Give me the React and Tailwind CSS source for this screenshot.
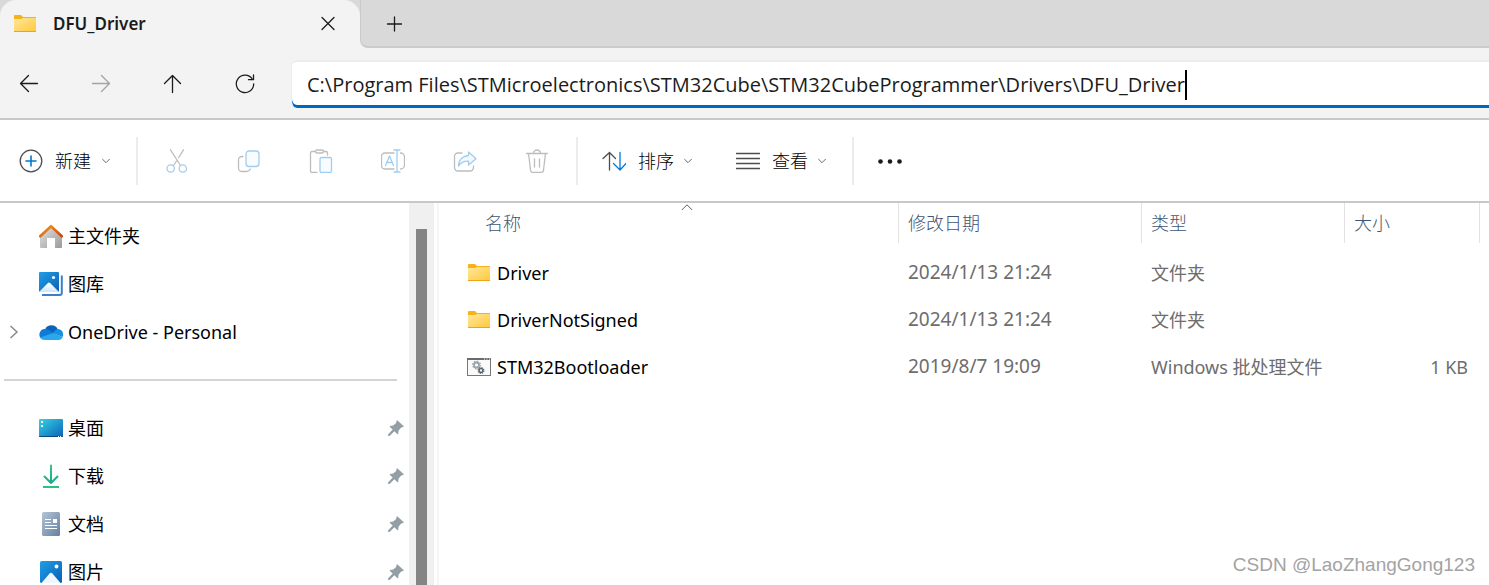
import { useState } from "react";

const FolderIcon = () => (
  <svg className="w-6 h-6 shrink-0" viewBox="0 0 24 24">
    <defs>
      <linearGradient id="folder" x1="0" y1="0" x2="1" y2="1">
        <stop offset="0" stopColor="#ffe79c" />
        <stop offset="1" stopColor="#ffc83a" />
      </linearGradient>
    </defs>
    <path d="M1 4a1 1 0 0 1 1-1h6l2 2h12.500a.5.5 0 0 1 .5.5V12H1z" fill="#f6b21b" />
    <path d="M1 7h7l2-1h13v13.500a.5.5 0 0 1-.5.5h-21a.5.5 0 0 1-.5-.5z" fill="url(#folder)" />
    <path d="M1 19h22v.5a.5.5 0 0 1-.5.5h-21a.5.5 0 0 1-.5-.5z" fill="#eaa51c" />
  </svg>
);

const BatchIcon = () => (
  <svg className="w-6 h-6 shrink-0" viewBox="0 0 24 24">
    <rect x=".5" y="3.500" width="23" height="17" fill="#fafafa" stroke="#77777a" />
    <path d="M0 3h24v2H0z" fill="#6b6b6e" />
    <path d="M17 4h1M19.500 4h1M22 4h1" stroke="#fff" />
    <circle cx="9.500" cy="10" r="2.500" fill="none" stroke="#9aa5ae" strokeWidth="1.800" />
    <circle cx="9.500" cy="10" r="3.800" fill="none" stroke="#9aa5ae" strokeWidth="1.400" strokeDasharray="1.500 1.480" />
    <circle cx="14" cy="15.500" r="1.900" fill="none" stroke="#5b666e" strokeWidth="1.500" />
    <circle cx="14" cy="15.500" r="2.900" fill="none" stroke="#5b666e" strokeWidth="1.200" strokeDasharray="1.200 1.080" />
  </svg>
);

const HomeIcon = () => (
  <svg className="w-6 h-6 shrink-0" viewBox="0 0 24 24">
    <defs>
      <linearGradient id="wall" x1="0" y1="0" x2="1" y2="1">
        <stop offset="0" stopColor="#e3e3e3" />
        <stop offset="1" stopColor="#9b9b9b" />
      </linearGradient>
      <linearGradient id="roof" x1="0" y1="0" x2="1" y2="1">
        <stop offset="0" stopColor="#f59a1b" />
        <stop offset="1" stopColor="#d0420f" />
      </linearGradient>
    </defs>
    <path d="M1 11 12 2l11 9v12a1 1 0 0 1-1 1h-6V14H8v10H2a1 1 0 0 1-1-1z" fill="url(#wall)" />
    <path d="M1.200 12.300 12 2.200l10.800 10.100" fill="none" stroke="url(#roof)" strokeWidth="2.600" strokeLinecap="round" strokeLinejoin="round" />
  </svg>
);

const GalleryIcon = () => (
  <svg className="w-6 h-6 shrink-0" viewBox="0 0 24 24">
    <defs>
      <linearGradient id="sky" x1="0" y1="0" x2="1" y2="1">
        <stop offset="0" stopColor="#1f9fe6" />
        <stop offset="1" stopColor="#0a5fb5" />
      </linearGradient>
      <linearGradient id="hill" x1="0" y1="0" x2="0" y2="1">
        <stop offset="0" stopColor="#fff" />
        <stop offset="1" stopColor="#cfe6fb" />
      </linearGradient>
    </defs>
    <path d="M22.800 3.500V21a2 2 0 0 1-2 2H3" fill="none" stroke="#3d80c6" strokeWidth="2" />
    <rect width="20" height="20" rx="1" fill="url(#sky)" />
    <path d="M0 20 8.700 11.300a1.800 1.800 0 0 1 2.600 0L20 20z" fill="url(#hill)" />
    <circle cx="14.500" cy="5.500" r="1.600" fill="#fff" />
  </svg>
);

const PicturesIcon = () => (
  <svg className="w-6 h-6 shrink-0" viewBox="0 0 24 24">
    <defs>
      <linearGradient id="photo" x1="0" y1="0" x2="1" y2="1">
        <stop offset="0" stopColor="#1f9fe6" />
        <stop offset="1" stopColor="#0a5fb5" />
      </linearGradient>
    </defs>
    <rect x="1" y="1" width="22" height="22" rx="1.500" fill="url(#photo)" />
    <path d="M2.500 23 10.600 13.400a1.900 1.900 0 0 1 2.800 0L21.500 23z" fill="#f0f7ff" />
    <circle cx="17.500" cy="6.500" r="1.900" fill="#fff" />
  </svg>
);

const OneDriveIcon = () => (
  <svg className="w-6 h-6 shrink-0" viewBox="0 0 24 24">
    <path d="M6 9.500A7 7 0 0 1 18.800 9.500L14 15z" fill="#0a63b8" />
    <path d="M5.500 9a5.600 5.600 0 0 1 3.700.8L17 14 2 18.500A5.600 5.600 0 0 1 5.500 9z" fill="#0f7bd6" />
    <path d="M18.800 9a5.400 5.400 0 0 1 4.700 8L14 13.200A7.500 7.500 0 0 1 18.800 9z" fill="#1790e2" />
    <path d="M1 17.500 14.500 13l9.200 4a4.500 4.500 0 0 1-4.400 3H6a5.800 5.800 0 0 1-5-2.500z" fill="#2aa8ec" />
  </svg>
);

const DesktopIcon = () => (
  <svg className="w-6 h-6 shrink-0" viewBox="0 0 24 24">
    <defs>
      <linearGradient id="desk" x1="0" y1="0" x2="1" y2="1">
        <stop offset="0" stopColor="#35d3e6" />
        <stop offset="1" stopColor="#0b62b8" />
      </linearGradient>
    </defs>
    <rect y="3" width="24" height="18" rx="1" fill="url(#desk)" />
    <path d="M0 20h24a1 1 0 0 1-1 1H1a1 1 0 0 1-1-1z" fill="#0b4a7c" />
    <path d="M2 5h2v2H2zM2 9h2v2H2zM19 20h1v1h-1zM21 20h1v1h-1z" fill="#fff" />
  </svg>
);

const DownloadIcon = () => (
  <svg className="w-6 h-6 shrink-0" viewBox="0 0 24 24">
    <defs>
      <linearGradient id="down" x1="0" y1="0" x2="0" y2="24" gradientUnits="userSpaceOnUse">
        <stop offset="0" stopColor="#35c987" />
        <stop offset="1" stopColor="#13a08c" />
      </linearGradient>
    </defs>
    <path d="M12 1.500V19M5.500 12.500l6.500 6.500 6.500-6.500" fill="none" stroke="url(#down)" strokeWidth="2" strokeLinejoin="round" strokeLinecap="round" />
    <path d="M4 23h16" stroke="#2fbf86" strokeWidth="2" />
  </svg>
);

const DocumentIcon = () => (
  <svg className="w-6 h-6 shrink-0" viewBox="0 0 24 24">
    <defs>
      <linearGradient id="doc" x1="0" y1="0" x2="1" y2="1">
        <stop offset="0" stopColor="#b3c4d6" />
        <stop offset="1" stopColor="#65819f" />
      </linearGradient>
    </defs>
    <rect x="3" width="18" height="24" rx="1.500" fill="url(#doc)" />
    <path d="M6 7.500h6M6 10.500h6M6 13.500h12M6 16.500h12" stroke="#fff" strokeWidth="1.200" />
    <rect x="14" y="7" width="4" height="4" fill="#fff" />
  </svg>
);

const PinIcon = () => (
  <svg className="w-4 h-4 shrink-0" viewBox="0 0 16 16" fill="#939fa6">
    <path d="M9.500.5 15.500 6c.4.500.2 1-.4 1.100l-1.900.4-2.700 3.300-.3 2.900c-.1.600-.6.800-1 .4L6.400 11.300 1.500 16 .2 15.900 0 14.500 4.700 9.600 1.900 6.900c-.4-.4-.2-.9.300-1l3-.5L8.200 3l.3-2c.1-.6.600-.8 1-.5z" />
  </svg>
);

const Chevron = () => (
  <svg className="w-2 h-2 shrink-0" viewBox="0 0 8 8" fill="none" stroke="#6a6a6a">
    <path d="M.3 2 4 5.700 7.700 2" />
  </svg>
);

// outlined icon on a 24px grid
const Line = ({ children, color = "#1b1b1b" }) => (
  <svg className="w-6 h-6 shrink-0" viewBox="0 0 24 24" fill="none" stroke={color} strokeWidth="1.300" strokeLinecap="round" strokeLinejoin="round">
    {children}
  </svg>
);

const navButtons = [
  { label: "返回", icon: <Line><path d="M20.500 11.500h-17M11.500 3.500l-8 8 8 8" /></Line> },
  { label: "前进", disabled: true, icon: <Line color="#a3a3a3"><path d="M3.500 11.500h17M12.500 3.500l8 8-8 8" /></Line> },
  { label: "向上", icon: <Line><path d="M11.500 20.500V3.500M3.500 11.500l8-8 8 8" /></Line> },
  { label: "刷新", icon: <Line><path d="M19.200 7A8.700 8.700 0 1 0 20.700 12M20.500 3v4.700h-5" /></Line> },
];

const editButtons = [
  {
    label: "剪切",
    icon: (
      <Line color="#bdbdbd">
        <path d="M5.500.8 15.500 16.500M18.500.8 13.700 8.500M11.500 12 8.500 16.500" />
        <g stroke="#9fcdf2"><circle cx="5.700" cy="19.500" r="3.700" /><circle cx="17.800" cy="19.500" r="3.700" /></g>
      </Line>
    ),
  },
  {
    label: "复制",
    icon: (
      <Line color="#bdbdbd">
        <path d="M6 7.500H5A3.500 3.500 0 0 0 1.500 11v8A3.500 3.500 0 0 0 5 22.500h4.500a4.500 4.500 0 0 0 4-2.500" />
        <rect x="9" y="2" width="13" height="15.500" rx="3" stroke="#9fcdf2" fill="#f9fcff" />
      </Line>
    ),
  },
  {
    label: "粘贴",
    icon: (
      <Line color="#bdbdbd">
        <path d="M6.500 2.500H3A1.500 1.500 0 0 0 1.500 4v18A1.500 1.500 0 0 0 3 23.500h5M14.500 2.500H17A1.500 1.500 0 0 1 18.500 4v2" />
        <rect x="6.500" y="1" width="8" height="3" rx="1.500" />
        <rect x="11" y="8.500" width="11.500" height="15" rx="1.500" stroke="#9fcdf2" fill="#f9fcff" />
      </Line>
    ),
  },
  {
    label: "重命名",
    icon: (
      <Line color="#bdbdbd">
        <path d="M13 4H4a3.500 3.500 0 0 0-3.500 3.500v9A3.500 3.500 0 0 0 4 20h9M19.500 4A4 4 0 0 1 23.500 8v8a4 4 0 0 1-4 4" />
        <path d="m4.500 16.500 4-9.500 4 9.500M6 13.500h5M16 1v22M13 1h6M13 23h6" stroke="#9fcdf2" />
      </Line>
    ),
  },
  {
    label: "共享",
    icon: (
      <Line color="#bdbdbd">
        <path d="M9 4H5a3.500 3.500 0 0 0-3.500 3.500v11A3.500 3.500 0 0 0 5 22h12a3.500 3.500 0 0 0 3.500-3.500V17" />
        <path d="M15.500 3 23 9.700 15.500 16v-3.800C11 12 8 13.500 5.500 17c0-6.500 4.500-10 10-10.500z" stroke="#9fcdf2" fill="#f3f9fe" />
      </Line>
    ),
  },
  {
    label: "删除",
    icon: (
      <Line color="#bdbdbd">
        <path d="M1.500 4.500h21M8.500 4.500a3.500 3.500 0 0 1 7 0M3.500 4.500l2 16.500a2.500 2.500 0 0 0 2.500 2.500h8a2.500 2.500 0 0 0 2.500-2.500l2-16.500M9.500 10v8M14.500 10v8" />
      </Line>
    ),
  },
];

const places = [
  { name: "主文件夹", icon: <HomeIcon /> },
  { name: "图库", icon: <GalleryIcon /> },
  { name: "OneDrive - Personal", icon: <OneDriveIcon />, expandable: true },
];

const pinned = [
  { name: "桌面", icon: <DesktopIcon /> },
  { name: "下载", icon: <DownloadIcon /> },
  { name: "文档", icon: <DocumentIcon /> },
  { name: "图片", icon: <PicturesIcon /> },
];

const files = [
  { name: "Driver", date: "2024/1/13 21:24", type: "文件夹", size: "", icon: <FolderIcon /> },
  { name: "DriverNotSigned", date: "2024/1/13 21:24", type: "文件夹", size: "", icon: <FolderIcon /> },
  { name: "STM32Bootloader", date: "2019/8/7 19:09", type: "Windows 批处理文件", size: "1 KB", icon: <BatchIcon /> },
];

const TabStrip = () => (
  <div className="flex h-12 bg-[#d9d9d9]">
    <div className="flex w-[360px] items-center rounded-t-2xl bg-[#f3f3f3] pl-[13px] pr-5">
      <FolderIcon />
      <span className="ml-4 flex-1 text-[17px] font-semibold text-[#1b1b1b]">DFU_Driver</span>
      <button aria-label="关闭标签页">
        <Line><path d="m6 5.500 12 12M18 5.500l-12 12" /></Line>
      </button>
    </div>
    {/* strip colour shows below the rounded corner */}
    <div className="flex flex-1 bg-[#f3f3f3]">
      <div className="flex flex-1 items-center rounded-bl-lg border-b-2 border-l border-[#cbcbcb] bg-[#d9d9d9] pl-[21px]">
        <button aria-label="新建标签页">
          <Line><path d="M12.500 6v14M5.500 13h14" /></Line>
        </button>
      </div>
    </div>
  </div>
);

const AddressBar = () => {
  const [path, setPath] = useState(
    "C:\\Program Files\\STMicroelectronics\\STM32Cube\\STM32CubeProgrammer\\Drivers\\DFU_Driver"
  );

  return (
    <div className="flex h-[70px] items-center bg-[#f3f3f3] pl-[17px] pt-0.5">
      <div className="flex gap-12">
        {navButtons.map((b) => (
          <button key={b.label} aria-label={b.label} disabled={b.disabled}>{b.icon}</button>
        ))}
      </div>
      <div className="ml-[34px] flex h-12 min-w-0 flex-1 items-center overflow-hidden rounded-l-md border-l border-t-2 border-[#ededed] bg-white pl-[15px] shadow-[inset_0_-3px_#0067c0]">
        <input
          aria-label="地址"
          spellCheck={false}
          value={path}
          onChange={(e) => setPath(e.target.value)}
          className="field-sizing-content max-w-full font-['Open_Sans',sans-serif] text-xl text-[#1b1b1b] outline-none"
        />
        <span className="h-[30px] w-0.5 shrink-0 bg-black" />
      </div>
    </div>
  );
};

const Toolbar = () => (
  <div className="flex h-[85px] items-center border-t-2 border-b-2 border-[#c8c8cc] bg-white text-lg font-light text-black">
    <button className="flex items-center pl-[19px]">
      <Line color="#4d4d4d">
        <circle cx="12" cy="12" r="10.800" />
        <path d="M12 7v10M7 12h10" stroke="#0078d4" strokeWidth="1.600" />
      </Line>
      <span className="ml-3 mr-[11px]">新建</span>
      <Chevron />
    </button>
    <div className="ml-[26px] h-12 w-0.5 bg-[#ececec]" />
    <div className="ml-[27px] flex gap-12">
      {editButtons.map((b) => (
        <button key={b.label} aria-label={b.label} disabled>{b.icon}</button>
      ))}
    </div>
    <div className="ml-[27px] h-12 w-0.5 bg-[#ececec]" />
    <button className="ml-6 flex items-center">
      <Line color="#4d4d4d">
        <path d="M7.500 21V3.500M1 9.500l6.500-6 6 6" />
        <path d="M18 3.500V21M11.500 14.500 18 21l6-6.500" stroke="#0078d4" />
      </Line>
      <span className="ml-3 mr-2.5">排序</span>
      <Chevron />
    </button>
    <button className="ml-11 flex items-center">
      <Line color="#4d4d4d"><path d="M.5 4.500h23M.5 9.500h23M.5 14.500h23M.5 19.500h23" /></Line>
      <span className="ml-3 mr-2.5">查看</span>
      <Chevron />
    </button>
    <div className="ml-[26px] h-12 w-0.5 bg-[#ececec]" />
    <button aria-label="更多" className="ml-6">
      <svg className="h-6 w-6" viewBox="0 0 24 24" fill="#1b1b1b">
        <circle cx="2.500" cy="12.500" r="2.300" />
        <circle cx="12" cy="12.500" r="2.300" />
        <circle cx="21.500" cy="12.500" r="2.300" />
      </svg>
    </button>
  </div>
);

const PlaceRow = ({ place, isPinned }) => (
  <li>
    <a href="#" className="flex h-12 items-center pr-[5px] text-lg text-black">
      <span className="flex w-[39px] shrink-0 pl-[9px]">
        {place.expandable && (
          <svg className="h-3.5 w-2.5" viewBox="0 0 10 14" fill="none" stroke="#8a8a8a" strokeWidth="1.500">
            <path d="m1.500 1 6.500 6-6.500 6" />
          </svg>
        )}
      </span>
      {place.icon}
      <span className="ml-[5px] flex-1">{place.name}</span>
      {isPinned && <PinIcon />}
    </a>
  </li>
);

const Sidebar = () => (
  <div className="flex w-[434px] shrink-0 overflow-hidden">
    <nav className="flex-1 pt-[9px]">
      <ul>{places.map((p) => <PlaceRow key={p.name} place={p} />)}</ul>
      <div className="flex h-12 items-center pl-1 pr-3">
        <hr className="flex-1 border-t-2 border-[#d4d4d4]" />
      </div>
      <ul>{pinned.map((p) => <PlaceRow key={p.name} place={p} isPinned />)}</ul>
    </nav>
    <div className="flex w-[25px] justify-center bg-[#f0f0f0] pt-[26px]">
      <div className="w-[11px] bg-[#858585]" />
    </div>
  </div>
);

const HeaderCell = ({ children }) => (
  <th className="p-0 align-top font-light">
    <div className="flex h-10 items-center border-r border-[#e2e2e2] pl-[9px]">{children}</div>
  </th>
);

const FileTable = () => (
  <div className="ml-[3px] flex-1 border-l-2 border-[#f5f5f5] pr-[9px]">
    <table className="w-full table-fixed text-left text-lg text-[#6d6d6d]">
      <colgroup>
        <col />
        <col className="w-[243px]" />
        <col className="w-[203px]" />
        <col className="w-[135px]" />
      </colgroup>
      <thead className="text-[#3f5571]">
        <tr className="h-[46px]">
          <th className="p-0 pl-9 align-top font-light">
            <div className="relative flex h-10 items-center border-r border-[#e2e2e2] pl-[10px]">
              名称
              <svg className="absolute left-1/2 top-0 h-2 w-3 -translate-x-1/2" viewBox="0 0 12 8" fill="none" stroke="#5f5f5f">
                <path d="M.8 7 6 1.800 11.200 7" />
              </svg>
            </div>
          </th>
          <HeaderCell>修改日期</HeaderCell>
          <HeaderCell>类型</HeaderCell>
          <HeaderCell>大小</HeaderCell>
        </tr>
      </thead>
      <tbody>
        {files.map((f) => (
          <tr key={f.name} className="h-[47px]">
            <td className="p-0 pl-7 text-black">
              <div className="flex items-center gap-1.5">
                {f.icon}
                {f.name}
              </div>
            </td>
            <td className="p-0 pl-[9px] text-[19px]">{f.date}</td>
            <td className="whitespace-nowrap p-0 pl-[9px]">{f.type}</td>
            <td className="p-0 pr-3 text-right">{f.size}</td>
          </tr>
        ))}
      </tbody>
    </table>
  </div>
);

export default function App() {
  return (
    <div className="relative flex h-screen flex-col overflow-hidden bg-white font-['Noto_Sans','Noto_Sans_CJK_SC',sans-serif]">
      <TabStrip />
      <AddressBar />
      <Toolbar />
      <main className="flex min-h-0 flex-1">
        <Sidebar />
        <FileTable />
      </main>
      <div className="absolute bottom-1.5 right-3.5 font-['Liberation_Sans',sans-serif] text-[19px] text-[#a3a3a3]">
        CSDN @LaoZhangGong123
      </div>
    </div>
  );
}
